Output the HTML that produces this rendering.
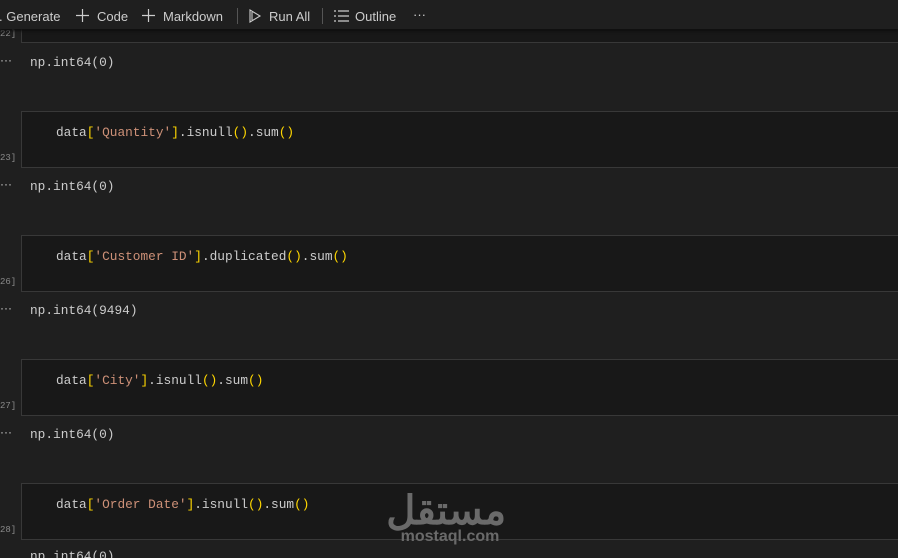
<!DOCTYPE html>
<html><head><meta charset="utf-8"><style>
html,body{margin:0;padding:0;width:898px;height:558px;overflow:hidden;background:#1f1f1f;position:relative;font-family:"Liberation Sans",sans-serif}
.tb{position:absolute;left:0;top:0;width:898px;height:29px;background:#1f1f1f;box-shadow:0 2px 3px #0e0e0e;z-index:5;color:#cccccc;font-size:13px}
.tb span{position:absolute;top:9px;white-space:nowrap}
.sep{position:absolute;top:8px;width:1px;height:16px;background:#555}
.cell{position:absolute;left:21px;width:900px;height:57px;background:#181818;border:1px solid #383838;box-sizing:border-box}
.mono{font-family:"Liberation Mono",monospace;font-size:12.8px;color:#cccccc;position:absolute;white-space:pre}
.s{color:#ce9178}.b{color:#ffd700}
.ec{position:absolute;left:0;font-family:"Liberation Mono",monospace;font-size:9px;color:#8a8a8a}
.dots{position:absolute;left:0;color:#ccc;font-size:12px}
</style></head><body>
<div class="tb">
<span style="left:-1px">. Generate</span>
<svg style="position:absolute;left:76px;top:9px" width="13" height="13"><path d="M6.5 0V13M0 6.5H13" stroke="#ccc" stroke-width="1.2"/></svg>
<span style="left:97px">Code</span>
<svg style="position:absolute;left:142px;top:9px" width="13" height="13"><path d="M6.5 0V13M0 6.5H13" stroke="#ccc" stroke-width="1.2"/></svg>
<span style="left:163px">Markdown</span>
<div class="sep" style="left:237px"></div>
<svg style="position:absolute;left:248px;top:9px" width="14" height="14"><path d="M2 1L12 7L2 13Z M4 3V11" fill="none" stroke="#ccc" stroke-width="1.1"/></svg>
<span style="left:269px">Run All</span>
<div class="sep" style="left:322px"></div>
<svg style="position:absolute;left:334px;top:10px" width="15" height="12"><path d="M0 1H2M0 6H2M0 11H2M4 1H15M4 6H15M4 11H15" stroke="#ccc" stroke-width="1.2"/></svg>
<span style="left:355px">Outline</span>
<span style="left:413px;top:7px">···</span>
</div>

<div class="cell" style="top:-14px"></div>
<div class="ec" style="top:29px">22]</div>
<div class="dots" style="top:53px">···</div>
<div class="mono" style="left:30px;top:55px">np.int64(0)</div>

<div class="cell" style="top:111px"></div>
<div class="mono" style="left:56px;top:125px">data<span class="b">[</span><span class="s">'Quantity'</span><span class="b">]</span>.isnull<span class="b">()</span>.sum<span class="b">()</span></div>
<div class="ec" style="top:153px">23]</div>
<div class="dots" style="top:177px">···</div>
<div class="mono" style="left:30px;top:179px">np.int64(0)</div>

<div class="cell" style="top:235px"></div>
<div class="mono" style="left:56px;top:249px">data<span class="b">[</span><span class="s">'Customer ID'</span><span class="b">]</span>.duplicated<span class="b">()</span>.sum<span class="b">()</span></div>
<div class="ec" style="top:277px">26]</div>
<div class="dots" style="top:301px">···</div>
<div class="mono" style="left:30px;top:303px">np.int64(9494)</div>

<div class="cell" style="top:359px"></div>
<div class="mono" style="left:56px;top:373px">data<span class="b">[</span><span class="s">'City'</span><span class="b">]</span>.isnull<span class="b">()</span>.sum<span class="b">()</span></div>
<div class="ec" style="top:401px">27]</div>
<div class="dots" style="top:425px">···</div>
<div class="mono" style="left:30px;top:427px">np.int64(0)</div>

<div class="cell" style="top:483px"></div>
<div class="mono" style="left:56px;top:497px">data<span class="b">[</span><span class="s">'Order Date'</span><span class="b">]</span>.isnull<span class="b">()</span>.sum<span class="b">()</span></div>
<div class="ec" style="top:525px">28]</div>
<div class="mono" style="left:30px;top:549px">np.int64(0)</div>

<div style="position:absolute;left:394px;top:486px;width:112px;text-align:center;color:#6a6a6a;font-family:'Liberation Sans','Noto Sans CJK SC',sans-serif;font-weight:bold;font-size:40px;line-height:50px;z-index:3" dir="rtl">مستقل</div>
<div style="position:absolute;left:394px;top:528px;width:112px;text-align:center;color:#6a6a6a;font-family:'Liberation Sans',sans-serif;font-weight:bold;font-size:16px;z-index:3">mostaql.com</div>
</body></html>
